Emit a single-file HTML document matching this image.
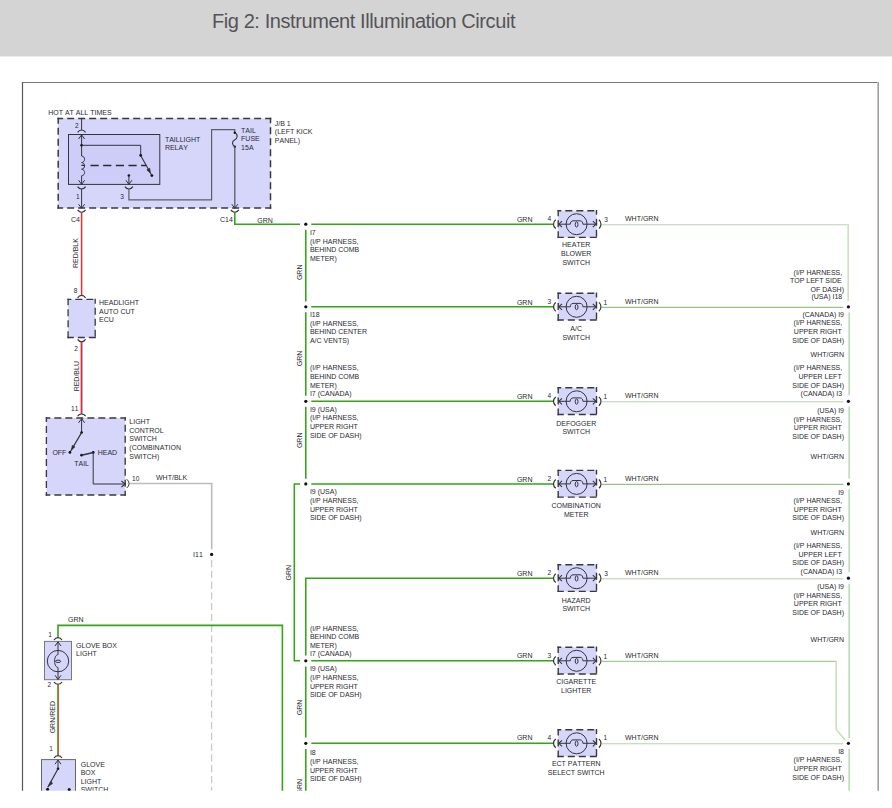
<!DOCTYPE html>
<html lang="en"><head><meta charset="utf-8"><title>Fig 2: Instrument Illumination Circuit</title>
<style>
html,body{margin:0;padding:0;background:#fff;}
body{width:892px;height:808px;overflow:hidden;position:relative;font-family:"Liberation Sans",sans-serif;}
#hdr{position:absolute;left:0;top:0;width:892px;height:57px;background:linear-gradient(#d4d4d4 0,#d4d4d4 56px,#ececec 56px,#ececec 57px);}
#ttl{position:absolute;left:212px;top:9px;margin:0;font-size:20px;line-height:24px;font-weight:400;color:#545458;white-space:nowrap;letter-spacing:-0.42px;}
#dia{position:absolute;left:0;top:0;}
#dia text{font-family:"Liberation Sans",sans-serif;font-kerning:none;}
</style></head><body>
<div id="hdr"><h1 id="ttl">Fig 2: Instrument Illumination Circuit</h1></div>
<svg id="dia" width="892" height="808" viewBox="0 0 892 808" font-size="7.0" fill="#2a2a32">
<defs><clipPath id="clip"><rect x="0" y="57" width="892" height="733.8"/></clipPath></defs>
<g clip-path="url(#clip)">
<line x1="22.0" y1="82.5" x2="878.6" y2="82.5" stroke="#787878" stroke-width="1.1"/>
<line x1="22.5" y1="82.0" x2="22.5" y2="800.0" stroke="#585858" stroke-width="1.2"/>
<line x1="877.5" y1="82.0" x2="877.5" y2="800.0" stroke="#c6c6c6" stroke-width="1.0"/>
<line x1="878.5" y1="82.0" x2="878.5" y2="800.0" stroke="#a0a0a0" stroke-width="1.0"/>
<text x="48.2" y="115.0">HOT AT ALL TIMES</text>
<rect x="58.2" y="118.5" width="212.3" height="89.5" fill="#d6d6fb"/>
<line x1="57.45" y1="118.50" x2="271.25" y2="118.50" stroke="#383840" stroke-width="1.5" stroke-dasharray="7 4" stroke-dashoffset="1.3"/>
<line x1="270.50" y1="117.75" x2="270.50" y2="208.75" stroke="#383840" stroke-width="1.5" stroke-dasharray="7 4" stroke-dashoffset="1.4"/>
<line x1="57.45" y1="208.00" x2="271.25" y2="208.00" stroke="#383840" stroke-width="1.5" stroke-dasharray="7 4" stroke-dashoffset="1.3"/>
<line x1="58.20" y1="117.75" x2="58.20" y2="208.75" stroke="#383840" stroke-width="1.5" stroke-dasharray="7 4" stroke-dashoffset="1.1"/>
<rect x="68.5" y="134.5" width="91.3" height="49.9" fill="#cdcdf8" stroke="#34343b" stroke-width="1"/>
<line x1="81.6" y1="118.5" x2="81.6" y2="130.0" stroke="#34343b" stroke-width="1"/>
<path d="M77.6 132.4 Q79.2 130.0 81.6 130.0 Q84.0 130.0 85.6 132.4" stroke="#34343b" stroke-width="1.2" fill="none"/>
<path d="M78.6 139.0 L81.6 134.8 L84.6 139.0" stroke="#34343b" stroke-width="1" fill="none"/>
<line x1="81.6" y1="134.8" x2="81.6" y2="156.0" stroke="#34343b" stroke-width="1"/>
<circle cx="81.6" cy="145.3" r="1.3" fill="#111"/>
<path d="M81.6 145.3 L140.7 145.3 L140.7 155.4" stroke="#34343b" stroke-width="1" fill="none"/>
<circle cx="140.7" cy="155.4" r="1.4" fill="#111"/>
<line x1="140.7" y1="155.4" x2="151.4" y2="174.8" stroke="#34343b" stroke-width="1.1"/>
<path d="M146.9 169.9 L150.3 172.8 L149.7 168.3 Z" stroke="#34343b" stroke-width="0.8" fill="#222"/>
<circle cx="151.9" cy="175.6" r="1.4" fill="#111"/>
<path d="M81.6 156 C85.6 156.3 85.6 162.3 81.6 162.6 C85.6 162.9 85.6 168.9 81.6 169.2 C85.6 169.5 85.6 175.5 81.6 175.8" stroke="#34343b" stroke-width="1" fill="none"/>
<line x1="81.6" y1="175.8" x2="81.6" y2="184.4" stroke="#34343b" stroke-width="1"/>
<path d="M78.6 180.2 L81.6 184.4 L84.6 180.2" stroke="#34343b" stroke-width="1" fill="none"/>
<line x1="81.4" y1="165.4" x2="84.6" y2="165.4" stroke="#2a2a30" stroke-width="1.4"/>
<line x1="90.5" y1="165.4" x2="146.3" y2="165.4" stroke="#2a2a30" stroke-width="1.5" stroke-dasharray="8.2 4.45"/>
<path d="M77.6 186.6 Q79.2 189.0 81.6 189.0 Q84.0 189.0 85.6 186.6" stroke="#34343b" stroke-width="1.2" fill="none"/>
<line x1="81.6" y1="189.0" x2="81.6" y2="208.0" stroke="#34343b" stroke-width="1"/>
<path d="M78.6 204.2 L81.6 208.4 L84.6 204.2" stroke="#34343b" stroke-width="1" fill="none"/>
<path d="M77.6 209.9 Q79.2 212.3 81.6 212.3 Q84.0 212.3 85.6 209.9" stroke="#34343b" stroke-width="1.2" fill="none"/>
<circle cx="128.9" cy="175.5" r="1.3" fill="#111"/>
<line x1="128.9" y1="175.5" x2="128.9" y2="184.4" stroke="#34343b" stroke-width="1"/>
<path d="M125.9 180.2 L128.9 184.4 L131.9 180.2" stroke="#34343b" stroke-width="1" fill="none"/>
<path d="M124.9 186.6 Q126.5 189.0 128.9 189.0 Q131.3 189.0 132.9 186.6" stroke="#34343b" stroke-width="1.2" fill="none"/>
<path d="M128.9 189 L128.9 199.9 L211.6 199.9 L211.6 129.7 L234.8 129.7 L234.8 132.8" stroke="#5c5c66" stroke-width="1.2" fill="none"/>
<circle cx="234.8" cy="132.8" r="1.2" fill="#111"/>
<circle cx="234.8" cy="146.7" r="1.2" fill="#111"/>
<path d="M234.8 132.8 C238.4 134.5 237.4 138.6 234.8 139.7 C231.8 141 231.60000000000002 145 234.8 146.7" stroke="#34343b" stroke-width="1.1" fill="none"/>
<line x1="234.8" y1="146.7" x2="234.8" y2="208.0" stroke="#62626c" stroke-width="1.4"/>
<path d="M231.8 204.2 L234.8 208.4 L237.8 204.2" stroke="#34343b" stroke-width="1" fill="none"/>
<path d="M230.8 209.9 Q232.4 212.3 234.8 212.3 Q237.2 212.3 238.8 209.9" stroke="#34343b" stroke-width="1.2" fill="none"/>
<text x="74.9" y="127.9" font-size="6.6">2</text>
<text x="76.0" y="198.6" font-size="6.6">1</text>
<text x="120.3" y="198.6" font-size="6.6">3</text>
<text x="164.9" y="142.0">TAILLIGHT</text>
<text x="164.9" y="150.4">RELAY</text>
<text x="241.1" y="132.9">TAIL</text>
<text x="241.1" y="141.3">FUSE</text>
<text x="241.1" y="149.9">15A</text>
<text x="274.8" y="125.8">J/B 1</text>
<text x="274.8" y="134.4">(LEFT KICK</text>
<text x="274.8" y="143.0">PANEL)</text>
<text x="71.0" y="221.5">C4</text>
<text x="220.0" y="222.0">C14</text>
<line x1="81.6" y1="212.4" x2="81.6" y2="295.0" stroke="#ee2a2a" stroke-width="1.5"/>
<text transform="translate(78.3 253.1) rotate(-90)" text-anchor="middle">RED/BLK</text>
<text x="73.8" y="292.7" font-size="6.6">8</text>
<path d="M77.6 297.8 Q79.2 295.4 81.6 295.4 Q84.0 295.4 85.6 297.8" stroke="#34343b" stroke-width="1.2" fill="none"/>
<rect x="68.1" y="299.4" width="27.1" height="38.1" fill="#d6d6fb"/>
<line x1="67.45" y1="299.40" x2="95.85" y2="299.40" stroke="#383840" stroke-width="1.3" stroke-dasharray="7 4" stroke-dashoffset="3.1"/>
<line x1="95.20" y1="298.75" x2="95.20" y2="338.15" stroke="#383840" stroke-width="1.3" stroke-dasharray="7 4" stroke-dashoffset="2.1"/>
<line x1="67.45" y1="337.50" x2="95.85" y2="337.50" stroke="#383840" stroke-width="1.3" stroke-dasharray="7 4" stroke-dashoffset="0.6"/>
<line x1="68.10" y1="298.75" x2="68.10" y2="338.15" stroke="#383840" stroke-width="1.3" stroke-dasharray="7 4" stroke-dashoffset="0.6"/>
<path d="M77.6 339.4 Q79.2 341.8 81.6 341.8 Q84.0 341.8 85.6 339.4" stroke="#34343b" stroke-width="1.2" fill="none"/>
<text x="99.0" y="304.9">HEADLIGHT</text>
<text x="99.0" y="314.0">AUTO CUT</text>
<text x="99.0" y="321.8">ECU</text>
<text x="74.2" y="350.8" font-size="6.6">2</text>
<line x1="82.3" y1="342.0" x2="82.3" y2="413.4" stroke="#8f86f2" stroke-width="0.9"/>
<line x1="81.3" y1="342.0" x2="81.3" y2="413.4" stroke="#f01a1a" stroke-width="1.3"/>
<text transform="translate(78.5 376.2) rotate(-90)" text-anchor="middle">RED/BLU</text>
<text x="71.0" y="410.9" font-size="6.6">11</text>
<path d="M77.6 416.2 Q79.2 413.8 81.6 413.8 Q84.0 413.8 85.6 416.2" stroke="#34343b" stroke-width="1.2" fill="none"/>
<rect x="46.4" y="418.0" width="78.8" height="77.0" fill="#d6d6fb"/>
<line x1="45.73" y1="418.00" x2="125.88" y2="418.00" stroke="#383840" stroke-width="1.35" stroke-dasharray="7 4" stroke-dashoffset="2.4"/>
<line x1="125.20" y1="417.32" x2="125.20" y2="495.68" stroke="#383840" stroke-width="1.35" stroke-dasharray="7 4" stroke-dashoffset="3.6"/>
<line x1="45.73" y1="495.00" x2="125.88" y2="495.00" stroke="#383840" stroke-width="1.35" stroke-dasharray="7 4" stroke-dashoffset="2.4"/>
<line x1="46.40" y1="417.32" x2="46.40" y2="495.68" stroke="#383840" stroke-width="1.35" stroke-dasharray="7 4" stroke-dashoffset="2.4"/>
<path d="M78.6 422.8 L81.6 418.6 L84.6 422.8" stroke="#34343b" stroke-width="1" fill="none"/>
<line x1="81.6" y1="418.6" x2="81.6" y2="432.6" stroke="#34343b" stroke-width="1"/>
<circle cx="81.6" cy="432.6" r="1.3" fill="#111"/>
<line x1="81.6" y1="432.6" x2="70.0" y2="452.2" stroke="#34343b" stroke-width="1.2"/>
<circle cx="69.9" cy="452.4" r="1.4" fill="#111"/>
<path d="M74.9 446.9 L71.6 449.7 L72.3 445.4 Z" stroke="#34343b" stroke-width="0.8" fill="#222"/>
<circle cx="81.6" cy="455.2" r="1.4" fill="#111"/>
<circle cx="93.2" cy="452.4" r="1.4" fill="#111"/>
<line x1="81.6" y1="455.2" x2="93.2" y2="452.4" stroke="#34343b" stroke-width="1.5"/>
<path d="M93.2 452.4 L93.2 484.0 L125.0 484.0" stroke="#34343b" stroke-width="1" fill="none"/>
<path d="M121.4 481.0 L125.2 484.0 L121.4 487.0" stroke="#34343b" stroke-width="1.05" fill="none"/>
<path d="M126.7 479.2 Q129.1 481.0 129.1 483.6 Q129.1 486.2 126.7 488.0" stroke="#34343b" stroke-width="1.0" fill="none"/>
<text x="52.4" y="455.1">OFF</text>
<text x="97.7" y="455.1">HEAD</text>
<text x="74.2" y="465.8">TAIL</text>
<text x="129.3" y="423.9">LIGHT</text>
<text x="129.3" y="432.7">CONTROL</text>
<text x="129.3" y="441.2">SWITCH</text>
<text x="129.3" y="450.0">(COMBINATION</text>
<text x="129.3" y="458.7">SWITCH)</text>
<text x="132.0" y="480.6" font-size="6.6">10</text>
<text x="156.0" y="480.0">WHT/BLK</text>
<path d="M130.0 483.5 L211.7 483.5 L211.7 549.2" stroke="#bcbcbc" stroke-width="1.6" fill="none"/>
<circle cx="211.6" cy="554.4" r="1.6" fill="#111"/>
<line x1="211.6" y1="559.9" x2="211.6" y2="800.0" stroke="#c9c9c9" stroke-width="1.3" stroke-dasharray="7.2 3.6"/>
<text x="193.1" y="556.9">I11</text>
<path d="M58.0 637.5 L58.0 625.4 L282.4 625.4 L282.4 800" stroke="#32a613" stroke-width="1.6" fill="none"/>
<text x="68.0" y="622.1">GRN</text>
<text x="48.3" y="636.6" font-size="6.6">1</text>
<path d="M54.0 640.0 Q55.6 637.6 58.0 637.6 Q60.4 637.6 62.0 640.0" stroke="#34343b" stroke-width="1.2" fill="none"/>
<rect x="44.5" y="641.4" width="27.0" height="38.3" fill="#d6d6fb" stroke="#777788" stroke-width="1"/>
<circle cx="58.0" cy="661.1" r="10.7" fill="none" stroke="#34343b" stroke-width="1"/>
<path d="M55.0 646.0 L58.0 641.8 L61.0 646.0" stroke="#34343b" stroke-width="1" fill="none"/>
<path d="M55.0 675.3 L58.0 679.5 L61.0 675.3" stroke="#34343b" stroke-width="1" fill="none"/>
<path d="M58.0 641.8 L58.0 654.6 C56.4 654.8 54.6 656.6 54.6 661.0 C54.6 665.4 56.4 667.3 58.0 667.5 L58.0 679.5" stroke="#34343b" stroke-width="1" fill="none"/>
<ellipse cx="58.1" cy="661.3" rx="2.6" ry="1.2" fill="none" stroke="#34343b" stroke-width="1"/>
<path d="M54.0 682.0 Q55.6 684.4 58.0 684.4 Q60.4 684.4 62.0 682.0" stroke="#34343b" stroke-width="1.2" fill="none"/>
<text x="47.6" y="687.3" font-size="6.6">2</text>
<text x="76.1" y="647.7">GLOVE BOX</text>
<text x="76.1" y="655.9">LIGHT</text>
<line x1="57.6" y1="684.6" x2="57.6" y2="755.4" stroke="#4aa828" stroke-width="1.0"/>
<line x1="58.5" y1="684.6" x2="58.5" y2="755.4" stroke="#dd4422" stroke-width="0.9"/>
<text transform="translate(55.0 717.2) rotate(-90)" text-anchor="middle">GRN/RED</text>
<text x="49.2" y="751.1" font-size="6.6">1</text>
<path d="M54.0 758.0 Q55.6 755.6 58.0 755.6 Q60.4 755.6 62.0 758.0" stroke="#34343b" stroke-width="1.2" fill="none"/>
<rect x="41.5" y="759.6" width="34.0" height="40.4" fill="#d6d6fb" stroke="#666" stroke-width="1"/>
<path d="M55.0 764.2 L58.0 760.0 L61.0 764.2" stroke="#34343b" stroke-width="1" fill="none"/>
<line x1="58.0" y1="760.0" x2="58.0" y2="768.8" stroke="#34343b" stroke-width="1"/>
<circle cx="58.0" cy="768.8" r="1.3" fill="#111"/>
<line x1="58.0" y1="768.8" x2="47.8" y2="787.2" stroke="#34343b" stroke-width="1.2"/>
<path d="M50.9 781.0 L48.2 786.6 L52.6 783.6 Z" stroke="#34343b" stroke-width="0.6" fill="#34343b"/>
<circle cx="47.6" cy="789.2" r="1.5" fill="#111"/>
<circle cx="69.2" cy="789.6" r="1.5" fill="#111"/>
<text x="80.7" y="767.0">GLOVE</text>
<text x="80.7" y="774.8">BOX</text>
<text x="80.7" y="784.2">LIGHT</text>
<text x="80.7" y="791.6">SWITCH</text>
<path d="M234.8 212.6 L234.8 224.2 L300.0 224.2" stroke="#32a613" stroke-width="1.55" fill="none"/>
<text x="257.3" y="222.6">GRN</text>
<line x1="311.3" y1="224.2" x2="553.2" y2="224.2" stroke="#32a613" stroke-width="1.55"/>
<circle cx="305.8" cy="224.2" r="1.6" fill="#111"/>
<line x1="311.3" y1="306.8" x2="553.2" y2="306.8" stroke="#32a613" stroke-width="1.55"/>
<circle cx="305.8" cy="306.8" r="1.6" fill="#111"/>
<line x1="311.3" y1="401.3" x2="553.2" y2="401.3" stroke="#32a613" stroke-width="1.55"/>
<circle cx="305.8" cy="401.3" r="1.6" fill="#111"/>
<line x1="311.3" y1="483.9" x2="553.2" y2="483.9" stroke="#32a613" stroke-width="1.55"/>
<circle cx="305.8" cy="483.9" r="1.6" fill="#111"/>
<line x1="311.3" y1="660.8" x2="553.2" y2="660.8" stroke="#32a613" stroke-width="1.55"/>
<circle cx="305.8" cy="660.8" r="1.6" fill="#111"/>
<line x1="311.3" y1="743.3" x2="553.2" y2="743.3" stroke="#32a613" stroke-width="1.55"/>
<circle cx="305.8" cy="743.3" r="1.6" fill="#111"/>
<line x1="305.8" y1="229.8" x2="305.8" y2="301.4" stroke="#32a613" stroke-width="1.55"/>
<line x1="305.8" y1="312.2" x2="305.8" y2="395.8" stroke="#32a613" stroke-width="1.55"/>
<line x1="305.8" y1="406.8" x2="305.8" y2="478.8" stroke="#32a613" stroke-width="1.55"/>
<path d="M300.0 483.9 L294.3 483.9 L294.3 660.8 L300.0 660.8" stroke="#32a613" stroke-width="1.55" fill="none"/>
<path d="M553.2 578.2 L305.8 578.2 L305.8 655.6" stroke="#32a613" stroke-width="1.55" fill="none"/>
<line x1="305.8" y1="666.4" x2="305.8" y2="737.6" stroke="#32a613" stroke-width="1.55"/>
<line x1="305.8" y1="749.0" x2="305.8" y2="800.0" stroke="#32a613" stroke-width="1.55"/>
<text x="309.9" y="234.9">I7</text>
<text x="309.9" y="243.8">(I/P HARNESS,</text>
<text x="309.9" y="252.1">BEHIND COMB</text>
<text x="309.9" y="260.9">METER)</text>
<text x="309.9" y="317.1">I18</text>
<text x="309.9" y="325.9">(I/P HARNESS,</text>
<text x="309.9" y="334.3">BEHIND CENTER</text>
<text x="309.9" y="343.1">A/C VENTS)</text>
<text x="309.9" y="369.9">(I/P HARNESS,</text>
<text x="309.9" y="378.8">BEHIND COMB</text>
<text x="309.9" y="387.5">METER)</text>
<text x="309.9" y="395.9">I7 (CANADA)</text>
<text x="309.9" y="412.0">I9 (USA)</text>
<text x="309.9" y="420.1">(I/P HARNESS,</text>
<text x="309.9" y="428.9">UPPER RIGHT</text>
<text x="309.9" y="437.7">SIDE OF DASH)</text>
<text x="309.9" y="494.0">I9 (USA)</text>
<text x="309.9" y="503.1">(I/P HARNESS,</text>
<text x="309.9" y="512.0">UPPER RIGHT</text>
<text x="309.9" y="520.0">SIDE OF DASH)</text>
<text x="309.9" y="630.8">(I/P HARNESS,</text>
<text x="309.9" y="639.2">BEHIND COMB</text>
<text x="309.9" y="647.9">METER)</text>
<text x="309.9" y="655.9">I7 (CANADA)</text>
<text x="309.9" y="671.1">I9 (USA)</text>
<text x="309.9" y="680.0">(I/P HARNESS,</text>
<text x="309.9" y="688.9">UPPER RIGHT</text>
<text x="309.9" y="697.1">SIDE OF DASH)</text>
<text x="309.9" y="755.0">I8</text>
<text x="309.9" y="763.9">(I/P HARNESS,</text>
<text x="309.9" y="772.7">UPPER RIGHT</text>
<text x="309.9" y="780.7">SIDE OF DASH)</text>
<text transform="translate(302.3 272.3) rotate(-90)" text-anchor="middle">GRN</text>
<text transform="translate(302.3 358.4) rotate(-90)" text-anchor="middle">GRN</text>
<text transform="translate(302.3 440.3) rotate(-90)" text-anchor="middle">GRN</text>
<text transform="translate(291.2 572.7) rotate(-90)" text-anchor="middle">GRN</text>
<text transform="translate(302.3 707.5) rotate(-90)" text-anchor="middle">GRN</text>
<text transform="translate(302.3 786.6) rotate(-90)" text-anchor="middle">GRN</text>
<line x1="601.8" y1="224.6" x2="848.6" y2="224.6" stroke="#c8dec4" stroke-width="1.15"/>
<line x1="601.8" y1="225.4" x2="848.6" y2="225.4" stroke="#e6f2e2" stroke-width="0.9"/>
<line x1="847.5" y1="224.5" x2="847.5" y2="301.2" stroke="#d8efd0" stroke-width="1.0"/>
<line x1="848.5" y1="224.0" x2="848.5" y2="301.2" stroke="#d0dccd" stroke-width="1.0"/>
<rect x="558.2" y="210.7" width="38.3" height="26.7" fill="#d6d6fb"/>
<line x1="557.50" y1="210.70" x2="597.20" y2="210.70" stroke="#383840" stroke-width="1.4" stroke-dasharray="7 4" stroke-dashoffset="3.2"/>
<line x1="596.50" y1="210.00" x2="596.50" y2="238.10" stroke="#383840" stroke-width="1.4" stroke-dasharray="7 4" stroke-dashoffset="2.2"/>
<line x1="557.50" y1="237.40" x2="597.20" y2="237.40" stroke="#383840" stroke-width="1.4" stroke-dasharray="7 4" stroke-dashoffset="0.7"/>
<line x1="558.20" y1="210.00" x2="558.20" y2="238.10" stroke="#383840" stroke-width="1.4" stroke-dasharray="7 4" stroke-dashoffset="0.7"/>
<circle cx="576.6" cy="224.2" r="10.5" fill="none" stroke="#34343b" stroke-width="1"/>
<path d="M558.6 224.2 L570.3 224.2 C570.3 222.8 571.0 220.8 573.0 220.8 L580.2 220.8 C582.2 220.8 582.9 222.8 582.9 224.2 L596.0 224.2" stroke="#34343b" stroke-width="1" fill="none"/>
<ellipse cx="576.6" cy="224.5" rx="1.4" ry="2.6" fill="none" stroke="#34343b" stroke-width="1"/>
<path d="M562.0 221.2 L558.8 224.2 L562.0 227.2" stroke="#34343b" stroke-width="1.05" fill="none"/>
<path d="M592.8 221.2 L596.0 224.2 L592.8 227.2" stroke="#34343b" stroke-width="1.05" fill="none"/>
<path d="M555.7 219.8 Q553.5 221.6 553.5 224.2 Q553.5 226.8 555.7 228.6" stroke="#34343b" stroke-width="1.25" fill="none"/>
<path d="M598.9 219.8 Q601.0 221.6 601.0 224.2 Q601.0 226.8 598.9 228.6" stroke="#34343b" stroke-width="1.2" fill="none"/>
<text x="516.9" y="221.8">GRN</text>
<text x="551.2" y="221.1" text-anchor="end" font-size="6.6">4</text>
<text x="604.2" y="222.1" font-size="6.6">3</text>
<text x="625.0" y="221.0">WHT/GRN</text>
<text x="576.2" y="246.7" text-anchor="middle">HEATER</text>
<text x="576.2" y="255.9" text-anchor="middle">BLOWER</text>
<text x="576.2" y="264.6" text-anchor="middle">SWITCH</text>
<line x1="601.8" y1="307.4" x2="843.3" y2="307.4" stroke="#86c470" stroke-width="1.15"/>
<line x1="601.8" y1="306.6" x2="843.3" y2="306.6" stroke="#efecee" stroke-width="0.9"/>
<rect x="558.2" y="293.3" width="38.3" height="26.7" fill="#d6d6fb"/>
<line x1="557.50" y1="293.30" x2="597.20" y2="293.30" stroke="#383840" stroke-width="1.4" stroke-dasharray="7 4" stroke-dashoffset="3.2"/>
<line x1="596.50" y1="292.60" x2="596.50" y2="320.70" stroke="#383840" stroke-width="1.4" stroke-dasharray="7 4" stroke-dashoffset="2.2"/>
<line x1="557.50" y1="320.00" x2="597.20" y2="320.00" stroke="#383840" stroke-width="1.4" stroke-dasharray="7 4" stroke-dashoffset="0.7"/>
<line x1="558.20" y1="292.60" x2="558.20" y2="320.70" stroke="#383840" stroke-width="1.4" stroke-dasharray="7 4" stroke-dashoffset="0.7"/>
<circle cx="576.6" cy="306.8" r="10.5" fill="none" stroke="#34343b" stroke-width="1"/>
<path d="M558.6 306.8 L570.3 306.8 C570.3 305.4 571.0 303.4 573.0 303.4 L580.2 303.4 C582.2 303.4 582.9 305.4 582.9 306.8 L596.0 306.8" stroke="#34343b" stroke-width="1" fill="none"/>
<ellipse cx="576.6" cy="307.1" rx="1.4" ry="2.6" fill="none" stroke="#34343b" stroke-width="1"/>
<path d="M562.0 303.8 L558.8 306.8 L562.0 309.8" stroke="#34343b" stroke-width="1.05" fill="none"/>
<path d="M592.8 303.8 L596.0 306.8 L592.8 309.8" stroke="#34343b" stroke-width="1.05" fill="none"/>
<path d="M555.7 302.4 Q553.5 304.2 553.5 306.8 Q553.5 309.4 555.7 311.2" stroke="#34343b" stroke-width="1.25" fill="none"/>
<path d="M598.9 302.4 Q601.0 304.2 601.0 306.8 Q601.0 309.4 598.9 311.2" stroke="#34343b" stroke-width="1.2" fill="none"/>
<text x="516.9" y="305.1">GRN</text>
<text x="551.2" y="304.4" text-anchor="end" font-size="6.6">3</text>
<text x="603.4" y="304.7" font-size="6.6">1</text>
<text x="625.0" y="303.8">WHT/GRN</text>
<text x="576.2" y="331.3" text-anchor="middle">A/C</text>
<text x="576.2" y="340.0" text-anchor="middle">SWITCH</text>
<line x1="601.8" y1="401.6" x2="843.3" y2="401.6" stroke="#c8dec4" stroke-width="1.15"/>
<line x1="601.8" y1="402.4" x2="843.3" y2="402.4" stroke="#e6f2e2" stroke-width="0.9"/>
<rect x="558.2" y="387.8" width="38.3" height="26.7" fill="#d6d6fb"/>
<line x1="557.50" y1="387.80" x2="597.20" y2="387.80" stroke="#383840" stroke-width="1.4" stroke-dasharray="7 4" stroke-dashoffset="3.2"/>
<line x1="596.50" y1="387.10" x2="596.50" y2="415.20" stroke="#383840" stroke-width="1.4" stroke-dasharray="7 4" stroke-dashoffset="2.2"/>
<line x1="557.50" y1="414.50" x2="597.20" y2="414.50" stroke="#383840" stroke-width="1.4" stroke-dasharray="7 4" stroke-dashoffset="0.7"/>
<line x1="558.20" y1="387.10" x2="558.20" y2="415.20" stroke="#383840" stroke-width="1.4" stroke-dasharray="7 4" stroke-dashoffset="0.7"/>
<circle cx="576.6" cy="401.3" r="10.5" fill="none" stroke="#34343b" stroke-width="1"/>
<path d="M558.6 401.3 L570.3 401.3 C570.3 399.9 571.0 397.9 573.0 397.9 L580.2 397.9 C582.2 397.9 582.9 399.9 582.9 401.3 L596.0 401.3" stroke="#34343b" stroke-width="1" fill="none"/>
<ellipse cx="576.6" cy="401.6" rx="1.4" ry="2.6" fill="none" stroke="#34343b" stroke-width="1"/>
<path d="M562.0 398.3 L558.8 401.3 L562.0 404.3" stroke="#34343b" stroke-width="1.05" fill="none"/>
<path d="M592.8 398.3 L596.0 401.3 L592.8 404.3" stroke="#34343b" stroke-width="1.05" fill="none"/>
<path d="M555.7 396.9 Q553.5 398.7 553.5 401.3 Q553.5 403.9 555.7 405.7" stroke="#34343b" stroke-width="1.25" fill="none"/>
<path d="M598.9 396.9 Q601.0 398.7 601.0 401.3 Q601.0 403.9 598.9 405.7" stroke="#34343b" stroke-width="1.2" fill="none"/>
<text x="516.9" y="398.9">GRN</text>
<text x="551.2" y="398.2" text-anchor="end" font-size="6.6">4</text>
<text x="603.4" y="399.2" font-size="6.6">1</text>
<text x="625.0" y="398.1">WHT/GRN</text>
<text x="576.2" y="425.5" text-anchor="middle">DEFOGGER</text>
<text x="576.2" y="434.2" text-anchor="middle">SWITCH</text>
<line x1="601.8" y1="484.4" x2="843.3" y2="484.4" stroke="#86c470" stroke-width="1.15"/>
<line x1="601.8" y1="483.6" x2="843.3" y2="483.6" stroke="#efecee" stroke-width="0.9"/>
<rect x="558.2" y="470.4" width="38.3" height="26.7" fill="#d6d6fb"/>
<line x1="557.50" y1="470.40" x2="597.20" y2="470.40" stroke="#383840" stroke-width="1.4" stroke-dasharray="7 4" stroke-dashoffset="3.2"/>
<line x1="596.50" y1="469.70" x2="596.50" y2="497.80" stroke="#383840" stroke-width="1.4" stroke-dasharray="7 4" stroke-dashoffset="2.2"/>
<line x1="557.50" y1="497.10" x2="597.20" y2="497.10" stroke="#383840" stroke-width="1.4" stroke-dasharray="7 4" stroke-dashoffset="0.7"/>
<line x1="558.20" y1="469.70" x2="558.20" y2="497.80" stroke="#383840" stroke-width="1.4" stroke-dasharray="7 4" stroke-dashoffset="0.7"/>
<circle cx="576.6" cy="483.9" r="10.5" fill="none" stroke="#34343b" stroke-width="1"/>
<path d="M558.6 483.9 L570.3 483.9 C570.3 482.5 571.0 480.5 573.0 480.5 L580.2 480.5 C582.2 480.5 582.9 482.5 582.9 483.9 L596.0 483.9" stroke="#34343b" stroke-width="1" fill="none"/>
<ellipse cx="576.6" cy="484.2" rx="1.4" ry="2.6" fill="none" stroke="#34343b" stroke-width="1"/>
<path d="M562.0 480.9 L558.8 483.9 L562.0 486.9" stroke="#34343b" stroke-width="1.05" fill="none"/>
<path d="M592.8 480.9 L596.0 483.9 L592.8 486.9" stroke="#34343b" stroke-width="1.05" fill="none"/>
<path d="M555.7 479.5 Q553.5 481.3 553.5 483.9 Q553.5 486.5 555.7 488.3" stroke="#34343b" stroke-width="1.25" fill="none"/>
<path d="M598.9 479.5 Q601.0 481.3 601.0 483.9 Q601.0 486.5 598.9 488.3" stroke="#34343b" stroke-width="1.2" fill="none"/>
<text x="516.9" y="481.5">GRN</text>
<text x="551.2" y="480.8" text-anchor="end" font-size="6.6">2</text>
<text x="603.4" y="481.8" font-size="6.6">1</text>
<text x="625.0" y="480.7">WHT/GRN</text>
<text x="576.2" y="507.9" text-anchor="middle">COMBINATION</text>
<text x="576.2" y="516.6" text-anchor="middle">METER</text>
<line x1="601.8" y1="578.5" x2="843.3" y2="578.5" stroke="#c8dec4" stroke-width="1.15"/>
<line x1="601.8" y1="579.5" x2="843.3" y2="579.5" stroke="#e6f2e2" stroke-width="0.9"/>
<rect x="558.2" y="564.7" width="38.3" height="26.7" fill="#d6d6fb"/>
<line x1="557.50" y1="564.70" x2="597.20" y2="564.70" stroke="#383840" stroke-width="1.4" stroke-dasharray="7 4" stroke-dashoffset="3.2"/>
<line x1="596.50" y1="564.00" x2="596.50" y2="592.10" stroke="#383840" stroke-width="1.4" stroke-dasharray="7 4" stroke-dashoffset="2.2"/>
<line x1="557.50" y1="591.40" x2="597.20" y2="591.40" stroke="#383840" stroke-width="1.4" stroke-dasharray="7 4" stroke-dashoffset="0.7"/>
<line x1="558.20" y1="564.00" x2="558.20" y2="592.10" stroke="#383840" stroke-width="1.4" stroke-dasharray="7 4" stroke-dashoffset="0.7"/>
<circle cx="576.6" cy="578.2" r="10.5" fill="none" stroke="#34343b" stroke-width="1"/>
<path d="M558.6 578.2 L570.3 578.2 C570.3 576.8 571.0 574.8 573.0 574.8 L580.2 574.8 C582.2 574.8 582.9 576.8 582.9 578.2 L596.0 578.2" stroke="#34343b" stroke-width="1" fill="none"/>
<ellipse cx="576.6" cy="578.5" rx="1.4" ry="2.6" fill="none" stroke="#34343b" stroke-width="1"/>
<path d="M562.0 575.2 L558.8 578.2 L562.0 581.2" stroke="#34343b" stroke-width="1.05" fill="none"/>
<path d="M592.8 575.2 L596.0 578.2 L592.8 581.2" stroke="#34343b" stroke-width="1.05" fill="none"/>
<path d="M555.7 573.8 Q553.5 575.6 553.5 578.2 Q553.5 580.8 555.7 582.6" stroke="#34343b" stroke-width="1.25" fill="none"/>
<path d="M598.9 573.8 Q601.0 575.6 601.0 578.2 Q601.0 580.8 598.9 582.6" stroke="#34343b" stroke-width="1.2" fill="none"/>
<text x="516.9" y="575.8">GRN</text>
<text x="551.2" y="575.1" text-anchor="end" font-size="6.6">2</text>
<text x="604.2" y="576.1" font-size="6.6">3</text>
<text x="625.0" y="575.0">WHT/GRN</text>
<text x="576.2" y="602.6" text-anchor="middle">HAZARD</text>
<text x="576.2" y="611.3" text-anchor="middle">SWITCH</text>
<line x1="601.8" y1="661.5" x2="836.2" y2="661.5" stroke="#98d286" stroke-width="1.15"/>
<line x1="601.8" y1="660.5" x2="836.2" y2="660.5" stroke="#efecee" stroke-width="0.9"/>
<path d="M836.2 660.9 L836.2 729.4 L845.6 740.4" stroke="#c2e2b6" stroke-width="1.5" fill="none"/>
<rect x="558.2" y="647.3" width="38.3" height="26.7" fill="#d6d6fb"/>
<line x1="557.50" y1="647.30" x2="597.20" y2="647.30" stroke="#383840" stroke-width="1.4" stroke-dasharray="7 4" stroke-dashoffset="3.2"/>
<line x1="596.50" y1="646.60" x2="596.50" y2="674.70" stroke="#383840" stroke-width="1.4" stroke-dasharray="7 4" stroke-dashoffset="2.2"/>
<line x1="557.50" y1="674.00" x2="597.20" y2="674.00" stroke="#383840" stroke-width="1.4" stroke-dasharray="7 4" stroke-dashoffset="0.7"/>
<line x1="558.20" y1="646.60" x2="558.20" y2="674.70" stroke="#383840" stroke-width="1.4" stroke-dasharray="7 4" stroke-dashoffset="0.7"/>
<circle cx="576.6" cy="660.8" r="10.5" fill="none" stroke="#34343b" stroke-width="1"/>
<path d="M558.6 660.8 L570.3 660.8 C570.3 659.4 571.0 657.4 573.0 657.4 L580.2 657.4 C582.2 657.4 582.9 659.4 582.9 660.8 L596.0 660.8" stroke="#34343b" stroke-width="1" fill="none"/>
<ellipse cx="576.6" cy="661.1" rx="1.4" ry="2.6" fill="none" stroke="#34343b" stroke-width="1"/>
<path d="M562.0 657.8 L558.8 660.8 L562.0 663.8" stroke="#34343b" stroke-width="1.05" fill="none"/>
<path d="M592.8 657.8 L596.0 660.8 L592.8 663.8" stroke="#34343b" stroke-width="1.05" fill="none"/>
<path d="M555.7 656.4 Q553.5 658.2 553.5 660.8 Q553.5 663.4 555.7 665.2" stroke="#34343b" stroke-width="1.25" fill="none"/>
<path d="M598.9 656.4 Q601.0 658.2 601.0 660.8 Q601.0 663.4 598.9 665.2" stroke="#34343b" stroke-width="1.2" fill="none"/>
<text x="516.9" y="658.4">GRN</text>
<text x="551.2" y="657.7" text-anchor="end" font-size="6.6">3</text>
<text x="603.4" y="658.7" font-size="6.6">1</text>
<text x="625.0" y="657.6">WHT/GRN</text>
<text x="576.2" y="684.0" text-anchor="middle">CIGARETTE</text>
<text x="576.2" y="692.7" text-anchor="middle">LIGHTER</text>
<line x1="601.8" y1="743.5" x2="843.3" y2="743.5" stroke="#c8dec4" stroke-width="1.15"/>
<line x1="601.8" y1="744.5" x2="843.3" y2="744.5" stroke="#e6f2e2" stroke-width="0.9"/>
<rect x="558.2" y="729.8" width="38.3" height="26.7" fill="#d6d6fb"/>
<line x1="557.50" y1="729.80" x2="597.20" y2="729.80" stroke="#383840" stroke-width="1.4" stroke-dasharray="7 4" stroke-dashoffset="3.2"/>
<line x1="596.50" y1="729.10" x2="596.50" y2="757.20" stroke="#383840" stroke-width="1.4" stroke-dasharray="7 4" stroke-dashoffset="2.2"/>
<line x1="557.50" y1="756.50" x2="597.20" y2="756.50" stroke="#383840" stroke-width="1.4" stroke-dasharray="7 4" stroke-dashoffset="0.7"/>
<line x1="558.20" y1="729.10" x2="558.20" y2="757.20" stroke="#383840" stroke-width="1.4" stroke-dasharray="7 4" stroke-dashoffset="0.7"/>
<circle cx="576.6" cy="743.3" r="10.5" fill="none" stroke="#34343b" stroke-width="1"/>
<path d="M558.6 743.3 L570.3 743.3 C570.3 741.9 571.0 739.9 573.0 739.9 L580.2 739.9 C582.2 739.9 582.9 741.9 582.9 743.3 L596.0 743.3" stroke="#34343b" stroke-width="1" fill="none"/>
<ellipse cx="576.6" cy="743.6" rx="1.4" ry="2.6" fill="none" stroke="#34343b" stroke-width="1"/>
<path d="M562.0 740.3 L558.8 743.3 L562.0 746.3" stroke="#34343b" stroke-width="1.05" fill="none"/>
<path d="M592.8 740.3 L596.0 743.3 L592.8 746.3" stroke="#34343b" stroke-width="1.05" fill="none"/>
<path d="M555.7 738.9 Q553.5 740.7 553.5 743.3 Q553.5 745.9 555.7 747.7" stroke="#34343b" stroke-width="1.25" fill="none"/>
<path d="M598.9 738.9 Q601.0 740.7 601.0 743.3 Q601.0 745.9 598.9 747.7" stroke="#34343b" stroke-width="1.2" fill="none"/>
<text x="516.9" y="740.0">GRN</text>
<text x="551.2" y="739.7" text-anchor="end" font-size="6.6">4</text>
<text x="603.4" y="739.6" font-size="6.6">1</text>
<text x="625.0" y="740.4">WHT/GRN</text>
<text x="576.2" y="765.8" text-anchor="middle">ECT PATTERN</text>
<text x="576.2" y="774.5" text-anchor="middle">SELECT SWITCH</text>
<line x1="848.5" y1="312.4" x2="848.5" y2="395.3" stroke="#e0e0e0" stroke-width="1.0"/>
<line x1="849.5" y1="312.4" x2="849.5" y2="395.3" stroke="#b7e4ad" stroke-width="1.05"/>
<line x1="848.5" y1="406.4" x2="848.5" y2="478.4" stroke="#e0e0e0" stroke-width="1.0"/>
<line x1="849.5" y1="406.4" x2="849.5" y2="478.4" stroke="#b7e4ad" stroke-width="1.05"/>
<line x1="848.5" y1="489.2" x2="848.5" y2="572.2" stroke="#e0e0e0" stroke-width="1.0"/>
<line x1="849.5" y1="489.2" x2="849.5" y2="572.2" stroke="#b7e4ad" stroke-width="1.05"/>
<line x1="848.5" y1="583.8" x2="848.5" y2="738.0" stroke="#e0e0e0" stroke-width="1.0"/>
<line x1="849.5" y1="583.8" x2="849.5" y2="738.0" stroke="#b7e4ad" stroke-width="1.05"/>
<line x1="848.5" y1="748.8" x2="848.5" y2="800.0" stroke="#e0e0e0" stroke-width="1.0"/>
<line x1="849.5" y1="748.8" x2="849.5" y2="800.0" stroke="#b7e4ad" stroke-width="1.05"/>
<circle cx="848.4" cy="306.8" r="1.6" fill="#111"/>
<circle cx="848.4" cy="401.3" r="1.6" fill="#111"/>
<circle cx="848.4" cy="483.9" r="1.6" fill="#111"/>
<circle cx="848.4" cy="578.2" r="1.6" fill="#111"/>
<circle cx="848.4" cy="743.3" r="1.6" fill="#111"/>
<text x="842.2" y="274.8" text-anchor="end">(I/P HARNESS,</text>
<text x="841.7" y="282.6" text-anchor="end">TOP LEFT SIDE</text>
<text x="844.0" y="292.0" text-anchor="end">OF DASH)</text>
<text x="842.2" y="299.4" text-anchor="end">(USA) I18</text>
<text x="844.0" y="316.5" text-anchor="end">(CANADA) I9</text>
<text x="842.2" y="325.4" text-anchor="end">(I/P HARNESS,</text>
<text x="841.7" y="334.0" text-anchor="end">UPPER RIGHT</text>
<text x="844.0" y="342.8" text-anchor="end">SIDE OF DASH)</text>
<text x="844.0" y="357.0" text-anchor="end">WHT/GRN</text>
<text x="842.2" y="369.8" text-anchor="end">(I/P HARNESS,</text>
<text x="841.7" y="378.7" text-anchor="end">UPPER LEFT</text>
<text x="844.0" y="387.6" text-anchor="end">SIDE OF DASH)</text>
<text x="842.2" y="395.8" text-anchor="end">(CANADA) I3</text>
<text x="844.0" y="413.0" text-anchor="end">(USA) I9</text>
<text x="842.2" y="422.0" text-anchor="end">(I/P HARNESS,</text>
<text x="841.7" y="430.3" text-anchor="end">UPPER RIGHT</text>
<text x="844.0" y="439.0" text-anchor="end">SIDE OF DASH)</text>
<text x="844.0" y="459.0" text-anchor="end">WHT/GRN</text>
<text x="844.0" y="494.8" text-anchor="end">I9</text>
<text x="842.2" y="503.0" text-anchor="end">(I/P HARNESS,</text>
<text x="841.7" y="511.7" text-anchor="end">UPPER RIGHT</text>
<text x="844.0" y="519.7" text-anchor="end">SIDE OF DASH)</text>
<text x="844.0" y="535.0" text-anchor="end">WHT/GRN</text>
<text x="842.2" y="548.3" text-anchor="end">(I/P HARNESS,</text>
<text x="841.7" y="556.9" text-anchor="end">UPPER LEFT</text>
<text x="844.0" y="565.0" text-anchor="end">SIDE OF DASH)</text>
<text x="842.2" y="573.8" text-anchor="end">(CANADA) I3</text>
<text x="844.0" y="589.2" text-anchor="end">(USA) I9</text>
<text x="842.2" y="598.0" text-anchor="end">(I/P HARNESS,</text>
<text x="841.7" y="606.0" text-anchor="end">UPPER RIGHT</text>
<text x="844.0" y="614.7" text-anchor="end">SIDE OF DASH)</text>
<text x="844.0" y="641.7" text-anchor="end">WHT/GRN</text>
<text x="844.0" y="754.0" text-anchor="end">I8</text>
<text x="842.2" y="762.2" text-anchor="end">(I/P HARNESS,</text>
<text x="841.7" y="770.9" text-anchor="end">UPPER RIGHT</text>
<text x="844.0" y="779.8" text-anchor="end">SIDE OF DASH)</text>
</g></svg>
</body></html>
